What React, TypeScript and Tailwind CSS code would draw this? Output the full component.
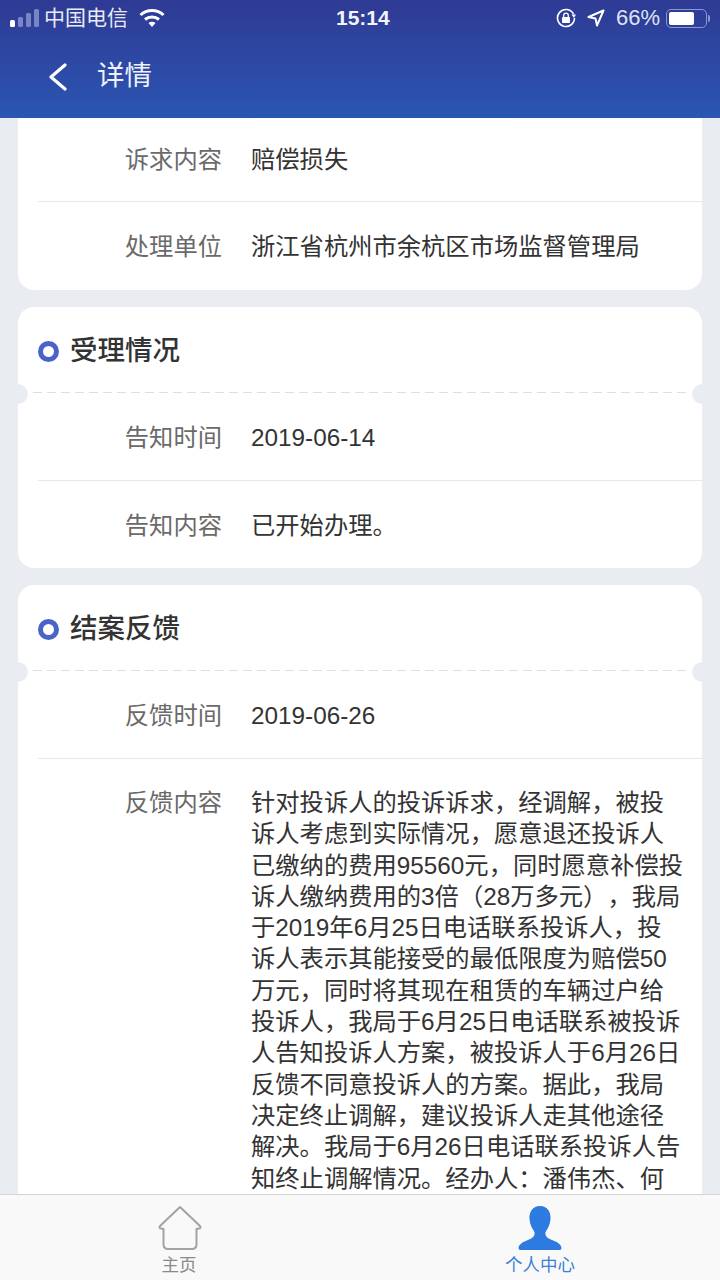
const FONT = "font-['Liberation_Sans','Noto_Sans_CJK_SC',sans-serif] [text-spacing-trim:space-all]";

function Row({ label, value, last, short }: { label: string; value: string; last?: boolean; short?: boolean }) {
  return (
    <div className={`ml-5 flex items-center pt-[2px] ${short ? "h-[87px]" : "h-[88px]"} ${last ? "" : "border-b border-[#e6e8ec]"}`}>
      <div className="w-[184px] shrink-0 text-right text-[24.3px] leading-[32px] text-[#6a6a6a]">{label}</div>
      <div className="ml-[29px] text-[24.3px] leading-[32px] text-[#333333]">{value}</div>
    </div>
  );
}

function Title({ text }: { text: string }) {
  return (
    <div className="relative">
      <div className="flex h-[85px] items-center pl-5 pt-[3px]">
        <span className="h-[21px] w-[21px] rounded-full border-[5px] border-[#4a63c8] bg-white" />
        <span className="ml-[11px] text-[27.5px] font-medium leading-[36px] text-[#333333]">{text}</span>
      </div>
      <div className="mx-[15px] h-px bg-[repeating-linear-gradient(90deg,#dcdfe4_0,#dcdfe4_9px,transparent_9px,transparent_14px)]" />
      <span className="absolute -left-[10px] -bottom-[11px] h-[20px] w-[20px] rounded-full bg-[#e9edf2]" />
      <span className="absolute -right-[10px] -bottom-[11px] h-[20px] w-[20px] rounded-full bg-[#e9edf2]" />
    </div>
  );
}

const lines = [
  "针对投诉人的投诉诉求，经调解，被投",
  "诉人考虑到实际情况，愿意退还投诉人",
  "已缴纳的费用95560元，同时愿意补偿投",
  "诉人缴纳费用的3倍（28万多元），我局",
  "于2019年6月25日电话联系投诉人，投",
  "诉人表示其能接受的最低限度为赔偿50",
  "万元，同时将其现在租赁的车辆过户给",
  "投诉人，我局于6月25日电话联系被投诉",
  "人告知投诉人方案，被投诉人于6月26日",
  "反馈不同意投诉人的方案。据此，我局",
  "决定终止调解，建议投诉人走其他途径",
  "解决。我局于6月26日电话联系投诉人告",
  "知终止调解情况。经办人：潘伟杰、何",
];

export default function App() {
  return (
    <div className={`flex h-[1280px] w-[720px] flex-col overflow-hidden bg-[#e9edf2] ${FONT}`}>
      <header className="h-[118px] shrink-0 bg-gradient-to-b from-[#2e3a93] to-[#2a56b3] text-white">
        <div className="relative flex h-[36px] items-center pl-[10px] pr-[10px]">
          <svg width="30" height="18" viewBox="0 0 30 18" className="shrink-0">
            <rect x="0" y="11" width="5" height="7" rx="1.5" fill="#fff" />
            <rect x="8" y="8" width="5" height="10" rx="1.5" fill="#7a86c4" />
            <rect x="16" y="4" width="5" height="14" rx="1.5" fill="#7a86c4" />
            <rect x="24" y="0" width="5" height="18" rx="1.5" fill="#7a86c4" />
          </svg>
          <span className="ml-[4px] text-[21px] leading-[28px] text-[#e8ebf6]">中国电信</span>
          <svg width="26" height="20" viewBox="0 0 26 20" className="ml-[11px] shrink-0" fill="none" stroke="#fff" strokeWidth="3">
            <path d="M1.5 7 C8 1 18 1 24.5 7" />
            <path d="M6 11.5 C10 8 16 8 20 11.5" />
            <path d="M13 19 L9.5 15 C11.5 13.4 14.5 13.4 16.5 15 Z" fill="#fff" stroke="none" />
          </svg>
          <span className="absolute left-[336px] text-[21px] font-bold leading-[28px] text-[#f2f4fb]">15:14</span>
          <div className="ml-auto flex items-center">
            <svg width="20" height="20" viewBox="0 0 20 20" fill="none" className="shrink-0">
              <path d="M17.5 6 A8.5 8.5 0 1 0 18.5 10" stroke="#fff" strokeWidth="1.6" />
              <path d="M15.5 6.5 L20 6.5 L18 10 Z" fill="#fff" />
              <rect x="6" y="9" width="8" height="6" rx="1" fill="#fff" />
              <path d="M7.7 9 V7.4 a2.3 2.3 0 0 1 4.6 0 V9" stroke="#fff" strokeWidth="1.3" />
            </svg>
            <svg width="18" height="18" viewBox="0 0 18 18" fill="none" className="ml-[11px] shrink-0">
              <path d="M16.5 1.5 L1.5 8 L8.5 9.5 L10 16.5 Z" stroke="#fff" strokeWidth="2" strokeLinejoin="round" />
            </svg>
            <span className="ml-[11px] text-[22px] leading-[28px] text-[#dfe3f3]">66%</span>
            <div className="ml-[6px] flex items-center">
              <div className="h-[19px] w-[41px] rounded-[5px] border border-[#8c97d2] p-[2px]">
                <div className="h-full w-[25px] rounded-[2px] bg-white" />
              </div>
              <div className="ml-[1px] h-[7px] w-[2px] rounded-r bg-[#8c97d2]" />
            </div>
          </div>
        </div>
        <div className="flex h-[78px] items-center pl-[49px] pt-[4px]">
          <svg width="18" height="28" viewBox="0 0 18 28" fill="none" stroke="#fff" strokeWidth="3.2" strokeLinecap="round" strokeLinejoin="round" className="shrink-0">
            <path d="M16 2 L2 14 L16 26" />
          </svg>
          <span className="ml-[30px] -translate-y-[1px] text-[27.5px] leading-[36px] text-[#eef1fa]">详情</span>
        </div>
      </header>

      <main className="flex min-h-0 flex-1 flex-col gap-[17px] overflow-hidden px-[18px]">
        <section className="shrink-0 rounded-b-[16px] bg-white">
          <div className="ml-5 flex h-[84px] items-center border-b border-[#e6e8ec]">
            <div className="w-[184px] shrink-0 text-right text-[24.3px] leading-[32px] text-[#6a6a6a]">诉求内容</div>
            <div className="ml-[29px] text-[24.3px] leading-[32px] text-[#333333]">赔偿损失</div>
          </div>
          <Row label="处理单位" value="浙江省杭州市余杭区市场监督管理局" last />
        </section>

        <section className="shrink-0 rounded-[16px] bg-white">
          <Title text="受理情况" />
          <Row label="告知时间" value="2019-06-14" />
          <Row label="告知内容" value="已开始办理。" last short />
        </section>

        <section className="shrink-0 rounded-t-[16px] bg-white">
          <Title text="结案反馈" />
          <Row label="反馈时间" value="2019-06-26" />
          <div className="ml-5 flex pt-[28px]">
            <div className="w-[184px] shrink-0 text-right text-[24.3px] leading-[31.3px] text-[#6a6a6a]">反馈内容</div>
            <div className="ml-[29px] whitespace-nowrap text-[24.3px] leading-[31.3px] text-[#333333]">
              {lines.map((l) => (
                <div key={l}>{l}</div>
              ))}
            </div>
          </div>
        </section>
      </main>

      <footer className="relative flex h-[86px] shrink-0 border-t border-[#d4d4d4] bg-[#f9f9f9]">
        <div className="flex w-[360px] flex-col items-center pt-[10px]">
          <svg width="46" height="46" viewBox="0 0 46 46" fill="none" stroke="#a3a3a3" strokeWidth="2" strokeLinejoin="round">
            <path d="M23 2 L43 21 Q44.5 23 42 23.5 L39.5 24 V39 Q39.5 44 35 44 H11 Q6.5 44 6.5 39 V24 L4 23.5 Q1.5 23 3 21 Z" />
          </svg>
          <span className="mt-[3px] pr-[2px] text-[17.5px] leading-[22px] text-[#8a8a8a]">主页</span>
        </div>
        <div className="flex w-[360px] flex-col items-center pt-[10px]">
          <svg width="46" height="46" viewBox="0 0 46 46" fill="#2d7ae0">
            <path d="M23 1 C31 1 34 8 33.5 14 C33 20 30.5 24 28.5 27 C28 31 30 33 35 35 C40 37 44 39 44.5 43 Q44.5 45 42.5 45 H3.5 Q1.5 45 1.5 43 C2 39 6 37 11 35 C16 33 18 31 17.5 27 C15.5 24 13 20 12.5 14 C12 8 15 1 23 1 Z" />
          </svg>
          <span className="mt-[3px] text-[17.5px] leading-[22px] text-[#3b7fd6]">个人中心</span>
        </div>
      </footer>
    </div>
  );
}
